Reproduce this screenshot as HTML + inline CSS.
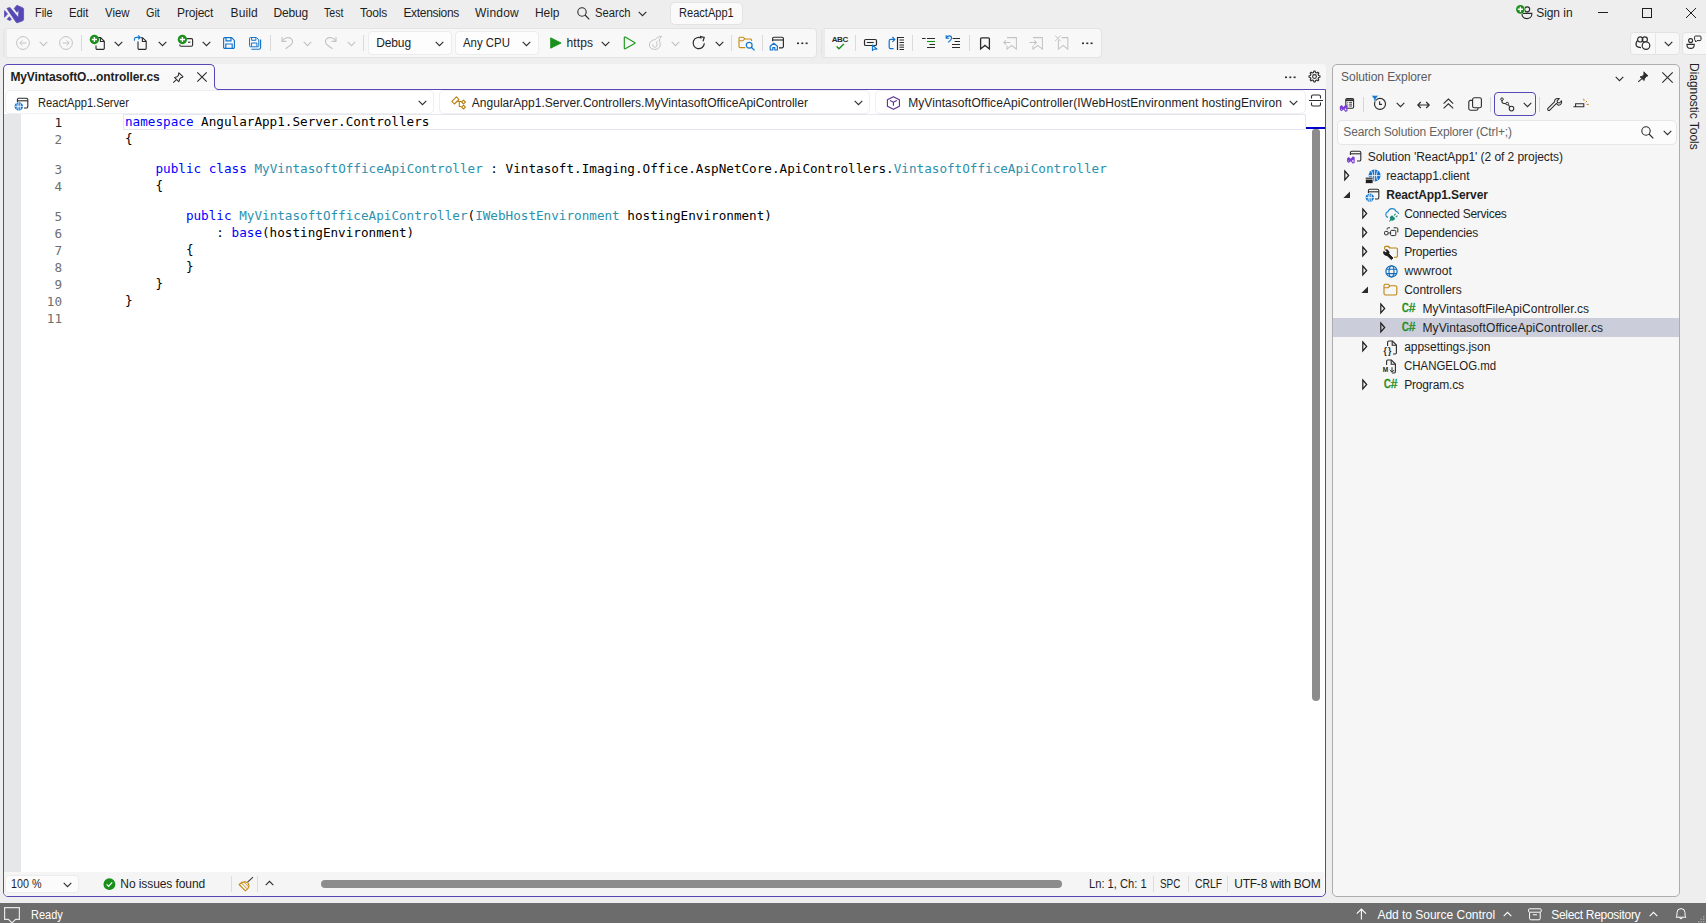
<!DOCTYPE html>
<html lang="en"><head><meta charset="utf-8"><title>ReactApp1 - Microsoft Visual Studio</title>
<style>
*{box-sizing:border-box;margin:0;padding:0}
html,body{width:1706px;height:923px;overflow:hidden;background:#eeeeee;font-family:'Liberation Sans',sans-serif;font-size:12px;color:#1e1e1e}
.t{position:absolute;white-space:pre;line-height:16px;height:16px}
.a{position:absolute}
svg{position:absolute;overflow:visible}
.sep{position:absolute;width:1px;background:#dcdcdc}
.tb{position:absolute;background:#f8f8f8;border-radius:4px;top:28px;height:30px;border:1px solid #e3e3e3}
.dd{position:absolute;background:#fdfdfd;border:1px solid #ececec;border-radius:4px}
.c{position:absolute;white-space:pre;font-family:'DejaVu Sans Mono','Liberation Mono',monospace;font-size:12.65px;line-height:17px;height:17px;color:#000;left:125px}
.k{color:#0000ff}.ty{color:#2b91af}
.ln{position:absolute;font-family:'DejaVu Sans Mono','Liberation Mono',monospace;font-size:12.65px;line-height:17px;height:17px;color:#6e6e6e;text-align:right;left:22px;width:40px}
</style></head><body>
<svg style="left:0px;top:0px" width="28" height="28" viewBox="0 0 28 28"><g fill="#5548b5" stroke="#5548b5" stroke-width="0.7" stroke-linejoin="round">
<path d="M4.5 10.6 V17.3 L7.5 14 Z"/>
<path d="M9.4 16.7 L7.2 19.3 L9.7 20.4 L11.4 19.5 Z"/>
<path d="M6.9 8.4 L9.9 7.4 L18.3 17.6 L18.9 9.9 L16.8 12.2 L14.2 8.4 L16.9 5.3 L23 7.9 L23.6 8.9 V19.7 L22.9 20.7 L17.2 22.8 L16.1 22.3 Z"/>
</g></svg>
<span class="t" style="left:35.20px;top:5.14px;font-size:12px;color:#1e1e1e;transform:scaleX(0.9053);transform-origin:0 0;">File</span>
<span class="t" style="left:69.00px;top:5.14px;font-size:12px;color:#1e1e1e;transform:scaleX(0.9417);transform-origin:0 0;">Edit</span>
<span class="t" style="left:105.10px;top:5.14px;font-size:12px;color:#1e1e1e;transform:scaleX(0.9492);transform-origin:0 0;">View</span>
<span class="t" style="left:146.40px;top:5.14px;font-size:12px;color:#1e1e1e;transform:scaleX(0.9000);transform-origin:0 0;">Git</span>
<span class="t" style="left:177.10px;top:5.14px;font-size:12px;color:#1e1e1e;letter-spacing:-0.202px;">Project</span>
<span class="t" style="left:230.60px;top:5.14px;font-size:12px;color:#1e1e1e;letter-spacing:0.073px;">Build</span>
<span class="t" style="left:273.60px;top:5.14px;font-size:12px;color:#1e1e1e;letter-spacing:-0.222px;">Debug</span>
<span class="t" style="left:324.10px;top:5.14px;font-size:12px;color:#1e1e1e;transform:scaleX(0.8865);transform-origin:0 0;">Test</span>
<span class="t" style="left:360.10px;top:5.14px;font-size:12px;color:#1e1e1e;letter-spacing:-0.228px;">Tools</span>
<span class="t" style="left:403.40px;top:5.14px;font-size:12px;color:#1e1e1e;letter-spacing:-0.311px;">Extensions</span>
<span class="t" style="left:475.00px;top:5.14px;font-size:12px;color:#1e1e1e;letter-spacing:0.197px;">Window</span>
<span class="t" style="left:535.00px;top:5.14px;font-size:12px;color:#1e1e1e;letter-spacing:-0.069px;">Help</span>
<span class="t" style="left:595.10px;top:5.14px;font-size:12px;color:#1e1e1e;transform:scaleX(0.9345);transform-origin:0 0;">Search</span>
<svg style="left:577px;top:6.6px" width="13" height="13" viewBox="0 0 13 13"><circle cx="5" cy="5" r="4.2" fill="none" stroke="#2b2b2b" stroke-width="1.1"/><path d="M8 8 L12.3 12.3" stroke="#2b2b2b" stroke-width="1.2"/></svg>
<svg style="left:637.6px;top:10.6px" width="9" height="6" viewBox="0 0 9 6"><path d="M0.7 0.9 L4.5 4.7 L8.3 0.9" fill="none" stroke="#2b2b2b" stroke-width="1.1"/></svg>
<div class="a" style="left:669.5px;top:1.5px;width:73px;height:23px;background:#fafafa;border:1px solid #e3e3e3;border-radius:5px"></div>
<span class="t" style="left:678.80px;top:5.14px;font-size:12px;color:#1e1e1e;transform:scaleX(0.9213);transform-origin:0 0;">ReactApp1</span>
<svg style="left:1516px;top:4px" width="18" height="16" viewBox="0 0 18 16">
<circle cx="11.2" cy="5.3" r="2.5" fill="none" stroke="#2b2b2b" stroke-width="1.15"/>
<path d="M6 9.4 H15.8 V10.2 A4.9 4.4 0 0 1 6 10.2 Z" fill="none" stroke="#2b2b2b" stroke-width="1.15"/>
<circle cx="4.4" cy="5.3" r="4.9" fill="#eeeeee"/>
<circle cx="4.4" cy="5.3" r="4.35" fill="#1a8f1a"/>
<path d="M4.4 2.7 V7.9 M1.8 5.3 H7" stroke="#fff" stroke-width="1.4"/></svg>
<span class="t" style="left:1536.20px;top:5.14px;font-size:12px;color:#1e1e1e;letter-spacing:-0.053px;">Sign in</span>
<div class="a" style="left:1598px;top:12px;width:10px;height:1px;background:#1e1e1e"></div>
<div class="a" style="left:1642px;top:8px;width:10px;height:10px;border:1px solid #1e1e1e"></div>
<svg style="left:1686px;top:8px" width="10" height="10" viewBox="0 0 10 10"><path d="M0 0 L10 10 M10 0 L0 10" stroke="#1e1e1e" stroke-width="1"/></svg>
<div class="tb" style="left:3px;width:814px"></div>
<div class="a" style="left:4px;top:29px;width:3px;height:28px;background:#ebebeb;border-radius:3px 0 0 3px"></div>
<div class="tb" style="left:821px;width:281px"></div>
<div class="a" style="left:822px;top:29px;width:2.5px;height:28px;background:#ebebeb;border-radius:3px 0 0 3px"></div>
<svg style="left:16px;top:36px" width="14" height="14" viewBox="0 0 14 14"><circle cx="7" cy="7" r="6.4" fill="none" stroke="#c3c3c3" stroke-width="1"/><path d="M10.3 7 H3.9 M6.4 4.4 L3.8 7 L6.4 9.6" fill="none" stroke="#c3c3c3" stroke-width="1"/></svg>
<svg style="left:38.5px;top:41px" width="9" height="6" viewBox="0 0 9 6"><path d="M0.7 0.9 L4.5 4.7 L8.3 0.9" fill="none" stroke="#c3c3c3" stroke-width="1.1"/></svg>
<svg style="left:59px;top:36px" width="14" height="14" viewBox="0 0 14 14"><circle cx="7" cy="7" r="6.4" fill="none" stroke="#c3c3c3" stroke-width="1"/><path d="M3.7 7 H10.1 M7.6 4.4 L10.2 7 L7.6 9.6" fill="none" stroke="#c3c3c3" stroke-width="1"/></svg>
<div class="sep" style="left:81px;top:35px;height:16px;background:#dadada"></div>
<svg style="left:90px;top:35px" width="16" height="16" viewBox="0 0 16 16"><path d="M7 2.6 H10.6 L14.3 6.3 V13.2 A1.2 1.2 0 0 1 13.1 14.4 H7.2 A1.2 1.2 0 0 1 6 13.2 V10.5" fill="none" stroke="#2b2b2b" stroke-width="1.1"/><path d="M10.4 2.8 V6.5 H14.1" fill="none" stroke="#2b2b2b" stroke-width="1.1"/><circle cx="4.4" cy="4.5" r="4.65" fill="#1a8f1a"/><path d="M4.4 1.9 V7.1 M1.8 4.5 H7" stroke="#fff" stroke-width="1.4"/></svg>
<svg style="left:114px;top:41px" width="9" height="6" viewBox="0 0 9 6"><path d="M0.7 0.9 L4.5 4.7 L8.3 0.9" fill="none" stroke="#2b2b2b" stroke-width="1.1"/></svg>
<svg style="left:133px;top:35px" width="16" height="16" viewBox="0 0 16 16"><path d="M5 6.5 V13.2 A1.2 1.2 0 0 0 6.2 14.4 H12 A1.2 1.2 0 0 0 13.2 13.2 V6.3 L9.6 2.7 H7.5" fill="none" stroke="#2b2b2b" stroke-width="1.1"/><path d="M9.4 2.9 V6.5 H13" fill="none" stroke="#2b2b2b" stroke-width="1.1"/><path d="M1.4 5.8 V4.4 A2 2 0 0 1 3.4 2.4 H7 M5.2 0.4 L7.2 2.4 L5.2 4.4" fill="none" stroke="#1173cf" stroke-width="1.1"/></svg>
<svg style="left:157.5px;top:41px" width="9" height="6" viewBox="0 0 9 6"><path d="M0.7 0.9 L4.5 4.7 L8.3 0.9" fill="none" stroke="#2b2b2b" stroke-width="1.1"/></svg>
<svg style="left:178px;top:35px" width="16" height="16" viewBox="0 0 16 16"><path d="M9 3.6 H13.4 A1.2 1.2 0 0 1 14.6 4.8 V10 A1.2 1.2 0 0 1 13.4 11.2 H3 A1.2 1.2 0 0 1 1.8 10 V9.5" fill="none" stroke="#2b2b2b" stroke-width="1.1"/><path d="M10 7.2 H12.4" stroke="#2b2b2b" stroke-width="1.1"/><circle cx="4.4" cy="4.5" r="4.65" fill="#1a8f1a"/><path d="M4.4 1.9 V7.1 M1.8 4.5 H7" stroke="#fff" stroke-width="1.4"/></svg>
<svg style="left:201.5px;top:41px" width="9" height="6" viewBox="0 0 9 6"><path d="M0.7 0.9 L4.5 4.7 L8.3 0.9" fill="none" stroke="#2b2b2b" stroke-width="1.1"/></svg>
<svg style="left:223px;top:37px" width="12" height="12" viewBox="0 0 12 12"><path d="M1.6 0.6 H8.6 L11.4 3.4 V10.2 A1.2 1.2 0 0 1 10.2 11.4 H1.8 A1.2 1.2 0 0 1 0.6 10.2 V1.6 A1 1 0 0 1 1.6 0.6 Z" fill="none" stroke="#1173cf" stroke-width="1.15"/><path d="M3 0.8 V3.8 H8 V0.8 M2.8 11.2 V7 H9.2 V11.2" fill="none" stroke="#1173cf" stroke-width="1.15"/></svg>
<svg style="left:249px;top:37px" width="13" height="13" viewBox="0 0 13 13"><g transform="scale(0.86)"><path d="M1.6 0.6 H8.6 L11.4 3.4 V10.2 A1.2 1.2 0 0 1 10.2 11.4 H1.8 A1.2 1.2 0 0 1 0.6 10.2 V1.6 A1 1 0 0 1 1.6 0.6 Z" fill="none" stroke="#1173cf" stroke-width="1.15"/><path d="M3 0.8 V3.8 H8 V0.8 M2.8 11.2 V7 H9.2 V11.2" fill="none" stroke="#1173cf" stroke-width="1.15"/></g><path d="M11.6 2.6 V10.4 A1.8 1.8 0 0 1 9.8 12.2 H2.4" fill="none" stroke="#1173cf" stroke-width="1.15"/></svg>
<div class="sep" style="left:270px;top:35px;height:16px;background:#dadada"></div>
<svg style="left:281px;top:36px" width="13" height="13" viewBox="0 0 13 13"><path d="M1 1 V5.4 H5.4" fill="none" stroke="#c3c3c3" stroke-width="1.1"/><path d="M1.3 5.2 C3.2 1.6 7.8 0.6 10.3 2.8 C12.6 5 11.6 7.6 9.4 9.2 L4.6 12.8" fill="none" stroke="#c3c3c3" stroke-width="1.1"/></svg>
<svg style="left:302.5px;top:41px" width="9" height="6" viewBox="0 0 9 6"><path d="M0.7 0.9 L4.5 4.7 L8.3 0.9" fill="none" stroke="#c3c3c3" stroke-width="1.1"/></svg>
<svg style="left:324px;top:36px" width="13" height="13" viewBox="0 0 13 13"><g transform="translate(13,0) scale(-1,1)"><path d="M1 1 V5.4 H5.4" fill="none" stroke="#c3c3c3" stroke-width="1.1"/><path d="M1.3 5.2 C3.2 1.6 7.8 0.6 10.3 2.8 C12.6 5 11.6 7.6 9.4 9.2 L4.6 12.8" fill="none" stroke="#c3c3c3" stroke-width="1.1"/></g></svg>
<svg style="left:346.5px;top:41px" width="9" height="6" viewBox="0 0 9 6"><path d="M0.7 0.9 L4.5 4.7 L8.3 0.9" fill="none" stroke="#c3c3c3" stroke-width="1.1"/></svg>
<div class="sep" style="left:363px;top:35px;height:16px;background:#dadada"></div>
<div class="dd" style="left:367.5px;top:31px;width:84px;height:24px"></div>
<span class="t" style="left:376.20px;top:35.04px;font-size:12px;color:#1e1e1e;letter-spacing:-0.122px;">Debug</span>
<svg style="left:434.5px;top:41px" width="9" height="6" viewBox="0 0 9 6"><path d="M0.7 0.9 L4.5 4.7 L8.3 0.9" fill="none" stroke="#2b2b2b" stroke-width="1.1"/></svg>
<div class="dd" style="left:454.6px;top:31px;width:84px;height:24px"></div>
<span class="t" style="left:463.30px;top:35.04px;font-size:12px;color:#1e1e1e;transform:scaleX(0.9511);transform-origin:0 0;">Any CPU</span>
<svg style="left:521.5px;top:41px" width="9" height="6" viewBox="0 0 9 6"><path d="M0.7 0.9 L4.5 4.7 L8.3 0.9" fill="none" stroke="#2b2b2b" stroke-width="1.1"/></svg>
<svg style="left:550px;top:37px" width="12" height="12" viewBox="0 0 12 12"><path d="M0.6 0.8 L11.2 6 L0.6 11.2 Z" fill="#1a8f1a" stroke="#1a8f1a" stroke-width="0.8" stroke-linejoin="round"/></svg>
<span class="t" style="left:566.50px;top:35.04px;font-size:12px;color:#1e1e1e;letter-spacing:0.096px;">https</span>
<svg style="left:600.5px;top:41px" width="9" height="6" viewBox="0 0 9 6"><path d="M0.7 0.9 L4.5 4.7 L8.3 0.9" fill="none" stroke="#2b2b2b" stroke-width="1.1"/></svg>
<svg style="left:623px;top:36px" width="13" height="14" viewBox="0 0 13 14"><path d="M1.3 1.6 A0.6 0.6 0 0 1 2.2 1.1 L11.6 6.4 A0.6 0.6 0 0 1 11.6 7.5 L2.2 12.8 A0.6 0.6 0 0 1 1.3 12.3 Z" fill="none" stroke="#1c9a1c" stroke-width="1.15" stroke-linejoin="round"/></svg>
<svg style="left:648px;top:35px" width="16" height="16" viewBox="0 0 16 16"><path d="M13.6 1.2 C10.8 1.4 8.6 2.6 7.4 4.6 C4.2 4.6 1.4 7 1.4 10 C1.4 12.8 3.8 14.4 6.8 14.4 C10.2 14.4 12.6 12 12.2 8.8 C12 7.2 11.2 6.4 11.4 5 C11.6 3.6 12.8 2.6 13.6 1.2 Z" fill="none" stroke="#c3c3c3" stroke-width="1"/><path d="M4.8 9.2 C4.4 11.2 5.8 12.4 7.2 12.2 C8.8 12 9.6 10.4 8.8 8.8 C8.2 7.8 8.6 6.8 9.6 5.8" fill="none" stroke="#c3c3c3" stroke-width="1"/></svg>
<svg style="left:671px;top:41px" width="9" height="6" viewBox="0 0 9 6"><path d="M0.7 0.9 L4.5 4.7 L8.3 0.9" fill="none" stroke="#c3c3c3" stroke-width="1.1"/></svg>
<svg style="left:692px;top:36px" width="14" height="14" viewBox="0 0 14 14"><path d="M12.3 7.2 A5.6 5.6 0 1 1 9.6 2.3" fill="none" stroke="#2b2b2b" stroke-width="1.2"/><path d="M8 0.4 L12.2 1.4 L11 5.4" fill="none" stroke="#2b2b2b" stroke-width="1.2"/></svg>
<svg style="left:714.5px;top:41px" width="9" height="6" viewBox="0 0 9 6"><path d="M0.7 0.9 L4.5 4.7 L8.3 0.9" fill="none" stroke="#2b2b2b" stroke-width="1.1"/></svg>
<div class="sep" style="left:731px;top:35px;height:16px;background:#dadada"></div>
<svg style="left:738px;top:36px" width="18" height="15" viewBox="0 0 18 15"><path d="M7.2 11.6 H2.2 A1.2 1.2 0 0 1 1 10.4 V2.4 A1.2 1.2 0 0 1 2.2 1.2 H5.2 L7 3 H12.4 A1.2 1.2 0 0 1 13.6 4.2 V5" fill="none" stroke="#c58a12" stroke-width="1.1"/><path d="M1.2 4.8 H4.8 L6.6 3.2" fill="none" stroke="#c58a12" stroke-width="1.1"/><circle cx="11.2" cy="9.2" r="2.9" fill="none" stroke="#1173cf" stroke-width="1.2"/><path d="M13.3 11.3 L16.6 14.4" stroke="#1173cf" stroke-width="1.3"/></svg>
<div class="sep" style="left:762px;top:35px;height:16px;background:#dadada"></div>
<svg style="left:769px;top:36px" width="16" height="15" viewBox="0 0 16 15"><path d="M3.6 5.2 V2.6 A1.4 1.4 0 0 1 5 1.2 H13 A1.4 1.4 0 0 1 14.4 2.6 V10.4 A1.4 1.4 0 0 1 13 11.8 H10" fill="none" stroke="#2b2b2b" stroke-width="1.15"/><path d="M3.6 4 H14.4" stroke="#2b2b2b" stroke-width="1.15"/><path d="M1.2 14 V10.2 L4.8 7.2 L8.4 10.2 V14 H5.8 V11.6 H3.8 V14 Z" fill="none" stroke="#1173cf" stroke-width="1.15" stroke-linejoin="round"/></svg>
<svg style="left:797px;top:42px" width="11" height="3"><rect x="0" y="0.5" width="2" height="1.6" fill="#2b2b2b"/><rect x="4.3" y="0.5" width="2" height="1.6" fill="#2b2b2b"/><rect x="8.6" y="0.5" width="2" height="1.6" fill="#2b2b2b"/></svg>
<svg style="left:832px;top:36px" width="16" height="15" viewBox="0 0 16 15"><path d="M4.6 10.4 L7 12.8 L11.8 8" fill="none" stroke="#1a8f1a" stroke-width="1.4"/></svg>
<span class="t" style="left:831.8px;top:34.7px;font-size:8px;font-weight:bold;line-height:9px;height:9px;letter-spacing:-0.45px;color:#2b2b2b">ABC</span>
<div class="sep" style="left:855px;top:35px;height:16px;background:#dadada"></div>
<svg style="left:863px;top:38px" width="16" height="14" viewBox="0 0 16 14"><rect x="1.5" y="1.5" width="12" height="6" rx="1.3" fill="none" stroke="#2b2b2b" stroke-width="1.2"/><path d="M3.8 4.5 H10.8" stroke="#2b2b2b" stroke-width="1.1"/><path d="M9.4 7 V12.6 L11 11 L14 11.2 Z" fill="#f8f8f8" stroke="#1173cf" stroke-width="1.05" stroke-linejoin="round"/></svg>
<svg style="left:888px;top:36px" width="17" height="15" viewBox="0 0 17 15"><path d="M9.5 1.5 H16 M11.5 4 H16 M11.5 6.5 H16 M11.5 9 H16 M11.5 11.2 H16 M11.5 13.5 H16" stroke="#2b2b2b" stroke-width="1"/><path d="M9.5 1 V14" stroke="#2b2b2b" stroke-width="1.2"/><path d="M5.6 12.6 H2.6 A1.4 1.4 0 0 1 1.2 11.2 V4.8 A1.4 1.4 0 0 1 2.6 3.4 H6.2 M4.4 1 L6.8 3.4 L4.4 5.8" fill="none" stroke="#1173cf" stroke-width="1.2"/></svg>
<div class="sep" style="left:912px;top:35px;height:16px;background:#dadada"></div>
<svg style="left:922px;top:38px" width="14" height="11" viewBox="0 0 14 11"><path d="M0 0.5 H3.6 M5 0.5 H13 M7.5 6.5 H13 M5 9.5 H13" stroke="#2b2b2b" stroke-width="1.1"/><path d="M5 3.5 H13" stroke="#1a8f1a" stroke-width="1.1"/></svg>
<svg style="left:945px;top:34px" width="16" height="15" viewBox="0 0 16 15"><path d="M7.6 4.5 H15 M9.6 7.5 H15 M7 10.5 H15 M7 13.5 H15" stroke="#2b2b2b" stroke-width="1.1"/><path d="M1.2 1.2 V4.2 H4.2 M1.4 4 C2.6 1.2 6.4 1.2 6.6 4 C6.6 5.8 4.6 7 3 8.4" fill="none" stroke="#1173cf" stroke-width="1.15"/></svg>
<div class="sep" style="left:969px;top:35px;height:16px;background:#dadada"></div>
<svg style="left:979px;top:37px" width="12" height="13" viewBox="0 0 12 13"><path d="M1.6 1.8 A1 1 0 0 1 2.6 0.8 H9.4 A1 1 0 0 1 10.4 1.8 V12 L6 8.4 L1.6 12 Z" fill="none" stroke="#2b2b2b" stroke-width="1.3" stroke-linejoin="miter"/></svg>
<svg style="left:1003px;top:37px" width="14" height="14" viewBox="0 0 14 14"><path d="M4 0.6 H13.4 V12.2 L8.7 8.4 L4 12.2 V8.4" fill="none" stroke="#c3c3c3" stroke-width="1.05"/><path d="M7.4 5.5 H0.8 M3 3.3 L0.8 5.5 L3 7.7" fill="none" stroke="#c3c3c3" stroke-width="1.05"/></svg>
<svg style="left:1029px;top:37px" width="14" height="14" viewBox="0 0 14 14"><path d="M4 0.6 H13.4 V12.2 L8.7 8.4 L4 12.2 V8.4" fill="none" stroke="#c3c3c3" stroke-width="1.05"/><path d="M0.4 5.5 H7.4 M5.2 3.3 L7.4 5.5 L5.2 7.7" fill="none" stroke="#c3c3c3" stroke-width="1.05"/></svg>
<svg style="left:1054px;top:35px" width="15" height="16" viewBox="0 0 15 16"><path d="M4.4 5 V14.2 L9.1 10.4 L13.8 14.2 V2.6 H7.6" fill="none" stroke="#c3c3c3" stroke-width="1.05"/><path d="M1 0.4 L6.8 6.2 M6.8 0.4 L1 6.2" stroke="#c3c3c3" stroke-width="1"/></svg>
<svg style="left:1082px;top:42px" width="11" height="3"><rect x="0" y="0.5" width="2" height="1.6" fill="#2b2b2b"/><rect x="4.3" y="0.5" width="2" height="1.6" fill="#2b2b2b"/><rect x="8.6" y="0.5" width="2" height="1.6" fill="#2b2b2b"/></svg>
<div class="a" style="left:1630.4px;top:31.5px;width:49.2px;height:23.5px;background:#f8f8f8;border:1px solid #e2e2e2;border-radius:4px"></div>
<div class="a" style="left:1655px;top:33px;width:1px;height:21px;background:#e6e6e6"></div>
<svg style="left:1635px;top:35px" width="16" height="15" viewBox="0 0 16 15"><circle cx="5.2" cy="4.4" r="2.6" fill="none" stroke="#2b2b2b" stroke-width="1.2"/><circle cx="9.8" cy="4.4" r="2.6" fill="none" stroke="#2b2b2b" stroke-width="1.2"/><path d="M2.6 5.6 C1 7 0.6 9.8 1.6 11.2 C2.4 12.2 4 12.6 6 12.6" fill="none" stroke="#2b2b2b" stroke-width="1.3"/><circle cx="11" cy="10.6" r="3.8" fill="#f8f8f8" stroke="#2b2b2b" stroke-width="1.2"/></svg>
<svg style="left:1663.5px;top:41px" width="9" height="6" viewBox="0 0 9 6"><path d="M0.7 0.9 L4.5 4.7 L8.3 0.9" fill="none" stroke="#2b2b2b" stroke-width="1.1"/></svg>
<div class="a" style="left:1682.3px;top:31.5px;width:27px;height:23.5px;background:#f8f8f8;border:1px solid #e2e2e2;border-radius:4px"></div>
<svg style="left:1686px;top:35px" width="16" height="15" viewBox="0 0 16 15"><circle cx="4.6" cy="5.6" r="2" fill="none" stroke="#2b2b2b" stroke-width="1.1"/><path d="M1 9.4 H8.2 V10 A3.6 3.4 0 0 1 1 10 Z" fill="none" stroke="#2b2b2b" stroke-width="1.1"/><path d="M9.4 1 H14 A1 1 0 0 1 15 2 V4.6 A1 1 0 0 1 14 5.6 H11 L9.6 7 V5.6 A1 1 0 0 1 8.6 4.6 V2 A1 1 0 0 1 9.4 1 Z" fill="none" stroke="#2b2b2b" stroke-width="1"/></svg>
<div class="a" style="left:3px;top:64px;width:1323px;height:27px;background:#f7f7f7;border-radius:4px 4px 0 0"></div>
<div class="a" style="left:3px;top:89px;width:1323px;height:808px;background:#fff;border:1px solid #5548b5;border-radius:0 0 5px 5px"></div>
<div class="a" style="left:3px;top:64px;width:212px;height:27px;background:#f9f9f9;border:1px solid #5548b5;border-bottom:none;border-radius:5px 5px 0 0"></div>
<div class="a" style="left:4px;top:88px;width:210px;height:3px;background:#f9f9f9"></div>
<svg style="left:214px;top:85px" width="5" height="5" viewBox="0 0 5 5"><path d="M0 0 V5 H5 V4.5 C2 4.5 0.5 3 0.5 0 Z" fill="#f9f9f9"/><path d="M0.5 0 C0.5 3 2 4.5 5 4.5" fill="none" stroke="#5548b5" stroke-width="1"/></svg>
<span class="t" style="left:10.40px;top:68.74px;font-size:12px;color:#1e1e1e;letter-spacing:-0.098px;font-weight:bold;">MyVintasoftO...ontroller.cs</span>
<svg style="left:172px;top:71.5px" width="12" height="11" viewBox="0 0 12 11"><path d="M6.9 0.9 L10.9 4.7 C10.4 5.6 9.8 5.6 9 5.6 L7.4 7.4 C7.6 8.4 7.4 9 6.8 9.6 L2.6 5.6 C3.2 5 4 4.8 4.8 5 L6.6 3.2 C6.4 2.4 6.4 1.6 6.9 0.9 Z" fill="none" stroke="#2b2b2b" stroke-width="1.05" stroke-linejoin="round"/><path d="M4.6 7.7 L1.2 10.6" stroke="#2b2b2b" stroke-width="1.05"/></svg>
<svg style="left:197px;top:72px" width="10" height="10" viewBox="0 0 10 10"><path d="M0.3 0.3 L9.7 9.7 M9.7 0.3 L0.3 9.7" stroke="#2b2b2b" stroke-width="1.1"/></svg>
<svg style="left:1285px;top:76px" width="11" height="3"><rect x="0" y="0.5" width="2" height="1.6" fill="#2b2b2b"/><rect x="4.3" y="0.5" width="2" height="1.6" fill="#2b2b2b"/><rect x="8.6" y="0.5" width="2" height="1.6" fill="#2b2b2b"/></svg>
<svg style="left:1307.6px;top:70.4px" width="13" height="13" viewBox="0 0 13 13"><circle cx="6.5" cy="6.5" r="1.9" fill="none" stroke="#2b2b2b" stroke-width="1.05"/><path d="M5.52 2.42 L5.81 1.04 L7.19 1.04 L7.48 2.42 L8.69 2.92 L9.87 2.15 L10.85 3.13 L10.08 4.31 L10.58 5.52 L11.96 5.81 L11.96 7.19 L10.58 7.48 L10.08 8.69 L10.85 9.87 L9.87 10.85 L8.69 10.08 L7.48 10.58 L7.19 11.96 L5.81 11.96 L5.52 10.58 L4.31 10.08 L3.13 10.85 L2.15 9.87 L2.92 8.69 L2.42 7.48 L1.04 7.19 L1.04 5.81 L2.42 5.52 L2.92 4.31 L2.15 3.13 L3.13 2.15 L4.31 2.92 Z" fill="none" stroke="#2b2b2b" stroke-width="1.1" stroke-linejoin="round"/></svg>
<div class="a" style="left:4px;top:90px;width:1321px;height:24px;background:#fff"></div>
<div class="a" style="left:5px;top:90px;width:429px;height:24px;background:#fff;border:1px solid #efeff3;border-radius:5px"></div>
<div class="a" style="left:439px;top:90px;width:431px;height:24px;background:#fff;border:1px solid #efeff3;border-radius:5px"></div>
<div class="a" style="left:875px;top:90px;width:431px;height:24px;background:#fff;border:1px solid #efeff3;border-radius:5px"></div>
<div class="a" style="left:1306px;top:90px;width:19px;height:24px;background:#fff"></div>
<svg style="left:14px;top:97px" width="15" height="14" viewBox="0 0 15 14"><path d="M3.4 5 V2.6 A1.4 1.4 0 0 1 4.8 1.2 H12.4 A1.4 1.4 0 0 1 13.8 2.6 V9.6 A1.4 1.4 0 0 1 12.4 11 H10" fill="none" stroke="#2b2b2b" stroke-width="1.1"/><path d="M3.4 3.8 H13.8" stroke="#2b2b2b" stroke-width="1.1"/><circle cx="4.8" cy="9.4" r="4.2" fill="#1173cf"/><path d="M0.8 9.4 H8.8 M4.8 5.4 V13.4 M2.6 6.2 C3.6 8 3.6 10.8 2.6 12.6 M7 6.2 C6 8 6 10.8 7 12.6" stroke="#fff" stroke-width="0.8" fill="none"/></svg>
<span class="t" style="left:37.60px;top:95.04px;font-size:12px;color:#1e1e1e;transform:scaleX(0.9281);transform-origin:0 0;">ReactApp1.Server</span>
<svg style="left:417.5px;top:99.5px" width="9" height="6" viewBox="0 0 9 6"><path d="M0.7 0.9 L4.5 4.7 L8.3 0.9" fill="none" stroke="#2b2b2b" stroke-width="1.1"/></svg>
<svg style="left:450.7px;top:96px" width="16" height="14" viewBox="0 0 16 14"><g fill="none" stroke="#b9800f" stroke-width="1.1" stroke-linejoin="round"><path d="M0.9 5.3 L5.4 0.8 L7.9 3.5 L3.4 8 Z"/><path d="M6.3 5.5 H10.6 M8.3 5.5 V10.5 H10.4"/><path d="M10.6 6 L12.5 4.1 L14.4 6 L12.5 7.9 Z"/><path d="M10.6 11.1 L12.5 9.2 L14.4 11.1 L12.5 13 Z"/></g></svg>
<span class="t" style="left:471.80px;top:95.04px;font-size:12px;color:#1e1e1e;letter-spacing:0.019px;">AngularApp1.Server.Controllers.MyVintasoftOfficeApiController</span>
<svg style="left:854px;top:99.5px" width="9" height="6" viewBox="0 0 9 6"><path d="M0.7 0.9 L4.5 4.7 L8.3 0.9" fill="none" stroke="#2b2b2b" stroke-width="1.1"/></svg>
<svg style="left:886.2px;top:96px" width="15" height="14" viewBox="0 0 15 14"><path d="M7.4 0.8 L13.4 3.8 V10.2 L7.4 13.2 L1.4 10.2 V3.8 Z" fill="none" stroke="#5c2d91" stroke-width="1.1" stroke-linejoin="round"/><path d="M4 4.6 L7.4 6.2 L10.8 4.6 M7.4 6.2 V9.8" fill="none" stroke="#5c2d91" stroke-width="1.15"/></svg>
<span class="t" style="left:908.20px;top:95.04px;font-size:12px;color:#1e1e1e;letter-spacing:0.067px;">MyVintasoftOfficeApiController(IWebHostEnvironment hostingEnviron</span>
<svg style="left:1289px;top:99.5px" width="9" height="6" viewBox="0 0 9 6"><path d="M0.7 0.9 L4.5 4.7 L8.3 0.9" fill="none" stroke="#2b2b2b" stroke-width="1.1"/></svg>
<svg style="left:1309px;top:94px" width="14" height="13" viewBox="0 0 14 13"><path d="M2.5 4.5 V2.5 A1.5 1.5 0 0 1 4 1 H10 A1.5 1.5 0 0 1 11.5 2.5 V4.5 M2.5 8.5 V10.5 A1.5 1.5 0 0 0 4 12 H10 A1.5 1.5 0 0 0 11.5 10.5 V8.5" fill="none" stroke="#2b2b2b" stroke-width="1.1"/><path d="M0 6.5 H14" stroke="#2b2b2b" stroke-width="1"/></svg>
<div class="a" style="left:4px;top:114px;width:17px;height:758px;background:#e6e7e8"></div>
<div class="a" style="left:123px;top:114px;width:1183px;height:16px;border:1px solid #e6e6ef"></div>
<div class="a" style="left:1306px;top:127px;width:19px;height:2px;background:#0000cd"></div>
<div class="a" style="left:1312px;top:129.4px;width:8px;height:571.6px;background:#8c8c8c;border-radius:3px 3px 4px 4px"></div>
<div class="ln" style="top:113.5px;color:#1e1e1e;">1</div>
<div class="c" style="top:112.8px"><span class="k">namespace</span> AngularApp1.Server.Controllers</div>
<div class="ln" style="top:130.5px;">2</div>
<div class="c" style="top:129.8px">{</div>
<div class="ln" style="top:160.5px;">3</div>
<div class="c" style="top:159.8px">    <span class="k">public</span> <span class="k">class</span> <span class="ty">MyVintasoftOfficeApiController</span> : Vintasoft.Imaging.Office.AspNetCore.ApiControllers.<span class="ty">VintasoftOfficeApiController</span></div>
<div class="ln" style="top:177.5px;">4</div>
<div class="c" style="top:176.8px">    {</div>
<div class="ln" style="top:207.5px;">5</div>
<div class="c" style="top:206.8px">        <span class="k">public</span> <span class="ty">MyVintasoftOfficeApiController</span>(<span class="ty">IWebHostEnvironment</span> hostingEnvironment)</div>
<div class="ln" style="top:224.5px;">6</div>
<div class="c" style="top:223.8px">            : <span class="k">base</span>(hostingEnvironment)</div>
<div class="ln" style="top:241.5px;">7</div>
<div class="c" style="top:240.8px">        {</div>
<div class="ln" style="top:258.5px;">8</div>
<div class="c" style="top:257.8px">        }</div>
<div class="ln" style="top:275.5px;">9</div>
<div class="c" style="top:274.8px">    }</div>
<div class="ln" style="top:292.5px;">10</div>
<div class="c" style="top:291.8px">}</div>
<div class="ln" style="top:309.5px;">11</div>
<div class="a" style="left:4px;top:872px;width:1320px;height:24px;background:#f5f5f5;border-radius:0 0 4px 4px"></div>
<div class="a" style="left:5px;top:875px;width:74px;height:18px;background:#fbfbfb;border:1px solid #ececec;border-radius:3px"></div>
<span class="t" style="left:11.00px;top:876.14px;font-size:12px;color:#1e1e1e;transform:scaleX(0.8965);transform-origin:0 0;">100 %</span>
<svg style="left:62.5px;top:881.5px" width="9" height="6" viewBox="0 0 9 6"><path d="M0.7 0.9 L4.5 4.7 L8.3 0.9" fill="none" stroke="#2b2b2b" stroke-width="1.1"/></svg>
<svg style="left:103px;top:878px" width="13" height="13" viewBox="0 0 13 13"><circle cx="6.4" cy="6.2" r="5.9" fill="#1a8f1a"/><path d="M3.6 6.4 L5.6 8.4 L9.2 4.4" fill="none" stroke="#fff" stroke-width="1.3"/></svg>
<span class="t" style="left:120.30px;top:876.14px;font-size:12px;color:#1e1e1e;letter-spacing:-0.084px;">No issues found</span>
<div class="sep" style="left:231px;top:876px;height:16px;background:#dcdcdc"></div>
<svg style="left:238px;top:876px" width="16" height="16" viewBox="0 0 16 16"><path d="M9.6 6.2 L15 1.2" stroke="#3a3a3a" stroke-width="1.1"/><path d="M1.1 8.5 L7.4 14.9 C10.6 12.6 11.7 9.6 10.2 7.4 C8.4 5 4.6 5.4 1.1 8.5 Z" fill="none" stroke="#c58a12" stroke-width="1.1" stroke-linejoin="round"/><path d="M3.4 7 L9.2 12.9 M5.8 6 L10.6 10.8" stroke="#c58a12" stroke-width="0.9"/></svg>
<div class="sep" style="left:257px;top:876px;height:16px;background:#dcdcdc"></div>
<svg style="left:265.2px;top:880.4px" width="9" height="6" viewBox="0 0 9 6"><path d="M0.7 5.1 L4.5 1.3 L8.3 5.1" fill="none" stroke="#2b2b2b" stroke-width="1.1"/></svg>
<div class="a" style="left:321px;top:880px;width:741px;height:8px;background:#8c8c8c;border-radius:4px"></div>
<span class="t" style="left:1089.00px;top:876.14px;font-size:12px;color:#1e1e1e;transform:scaleX(0.9284);transform-origin:0 0;">Ln: 1, Ch: 1</span>
<div class="sep" style="left:1153.4px;top:876px;height:16px;background:#dcdcdc"></div>
<span class="t" style="left:1160.20px;top:876.14px;font-size:12px;color:#1e1e1e;transform:scaleX(0.8237);transform-origin:0 0;">SPC</span>
<div class="sep" style="left:1187.5px;top:876px;height:16px;background:#dcdcdc"></div>
<span class="t" style="left:1194.50px;top:876.14px;font-size:12px;color:#1e1e1e;transform:scaleX(0.8676);transform-origin:0 0;">CRLF</span>
<div class="sep" style="left:1227px;top:876px;height:16px;background:#dcdcdc"></div>
<span class="t" style="left:1234.20px;top:876.14px;font-size:12px;color:#1e1e1e;letter-spacing:-0.219px;">UTF-8 with BOM</span>
<div class="a" style="left:1332px;top:64px;width:348px;height:833px;background:#f6f6f6;border:1px solid #adadad;border-radius:5px"></div>
<span class="t" style="left:1341.10px;top:69.44px;font-size:12px;color:#5c5c5c;letter-spacing:-0.068px;">Solution Explorer</span>
<svg style="left:1614.5px;top:75.5px" width="9" height="6" viewBox="0 0 9 6"><path d="M0.7 0.9 L4.5 4.7 L8.3 0.9" fill="none" stroke="#2b2b2b" stroke-width="1.1"/></svg>
<svg style="left:1637px;top:71px" width="12" height="12" viewBox="0 0 12 12"><path d="M6.8 0.8 L11 4.8 L9.4 5.4 L7.4 7.8 L7.2 9.6 L3 5.8 L5.2 5.4 L7 3.2 Z" fill="#2b2b2b" stroke="#2b2b2b" stroke-width="0.8" stroke-linejoin="round"/><path d="M5 7.6 L1.2 10.8" stroke="#2b2b2b" stroke-width="1.1"/></svg>
<svg style="left:1661.5px;top:71.5px" width="11" height="11" viewBox="0 0 11 11"><path d="M0.3 0.3 L10.7 10.7 M10.7 0.3 L0.3 10.7" stroke="#2b2b2b" stroke-width="1.1"/></svg>
<svg style="left:1339px;top:96px" width="16" height="16" viewBox="0 0 16 16"><rect x="6.8" y="2.6" width="7.8" height="9.6" rx="1.2" fill="none" stroke="#2b2b2b" stroke-width="1.1"/><path d="M6.8 4.2 H14.6" stroke="#2b2b2b" stroke-width="1.7"/><path d="M8.4 6.4 H9.2 M10.2 6.4 H13 M8.4 8.2 H9.2 M10.2 8.2 H13 M8.4 10 H9.2 M10.2 10 H13" stroke="#2b2b2b" stroke-width="0.9"/><path d="M0.8 8.4 m0 2.2 l1.7 -1.5 l2.1 1.8 l2 -2.4 l1.9 0.9 v5.6 l-1.9 0.9 l-2 -2.4 l-2.1 1.8 l-1.7 -1.5 z m1.5 1.9 v1.4 l0.9 -0.7 z m3.3 0.7 l1.7 1.6 v-3.2 z" fill="#7a3ed6" fill-rule="evenodd"/></svg>
<div class="sep" style="left:1363px;top:97px;height:15px;background:#d6d6d6"></div>
<svg style="left:1371px;top:95px" width="16" height="16" viewBox="0 0 16 16"><circle cx="9" cy="8.9" r="5.5" fill="none" stroke="#2b2b2b" stroke-width="1.15"/><path d="M8.6 6.2 V9.4 H11" fill="none" stroke="#2b2b2b" stroke-width="1.1"/><path d="M0.4 0.6 H7.4 L4.9 3.8 V6.8 L2.9 5.6 V3.8 Z" fill="#1173cf" stroke="#f7f7f7" stroke-width="0.5"/></svg>
<svg style="left:1396px;top:101.5px" width="9" height="6" viewBox="0 0 9 6"><path d="M0.7 0.9 L4.5 4.7 L8.3 0.9" fill="none" stroke="#2b2b2b" stroke-width="1.1"/></svg>
<svg style="left:1416.5px;top:99.5px" width="13" height="10" viewBox="0 0 13 10"><path d="M0.8 5 H12.2 M3.8 2 L0.8 5 L3.8 8 M9.2 2 L12.2 5 L9.2 8" fill="none" stroke="#2b2b2b" stroke-width="1.15"/></svg>
<svg style="left:1443.4px;top:98.4px" width="11" height="11" viewBox="0 0 11 11"><path d="M0.6 5.6 L5.4 1 L10.2 5.6 M0.6 10.4 L5.4 5.8 L10.2 10.4" fill="none" stroke="#2b2b2b" stroke-width="1.05"/></svg>
<svg style="left:1468px;top:96.6px" width="15" height="14" viewBox="0 0 15 14"><rect x="4.6" y="0.8" width="8.8" height="10" rx="1.8" fill="none" stroke="#2b2b2b" stroke-width="1.1"/><path d="M4.4 3.4 H2.6 A1.8 1.8 0 0 0 0.8 5.2 V11.4 A1.8 1.8 0 0 0 2.6 13.2 H8.2 A1.8 1.8 0 0 0 10 11.4 V11" fill="none" stroke="#2b2b2b" stroke-width="1.1"/></svg>
<div class="sep" style="left:1490px;top:97px;height:15px;background:#d6d6d6"></div>
<div class="a" style="left:1494px;top:92px;width:42px;height:24px;background:#f5f5f5;border:1.3px solid #5449b5;border-radius:4px"></div>
<svg style="left:1499.6px;top:96.6px" width="15" height="15" viewBox="0 0 15 15"><circle cx="2" cy="2.2" r="1.3" fill="none" stroke="#2b2b2b" stroke-width="1"/><circle cx="7.2" cy="6.6" r="1.3" fill="none" stroke="#2b2b2b" stroke-width="1"/><circle cx="11.5" cy="11.6" r="2.3" fill="none" stroke="#2b2b2b" stroke-width="1.05"/><path d="M2 3.6 V5 C2 6.6 3.6 6.6 5.8 6.6 M8.2 7.6 L9.8 9.8" fill="none" stroke="#2b2b2b" stroke-width="1.05"/></svg>
<svg style="left:1523px;top:101.5px" width="9" height="6" viewBox="0 0 9 6"><path d="M0.7 0.9 L4.5 4.7 L8.3 0.9" fill="none" stroke="#2b2b2b" stroke-width="1.1"/></svg>
<div class="sep" style="left:1539px;top:97px;height:15px;background:#d6d6d6"></div>
<svg style="left:1547px;top:97px" width="15" height="15" viewBox="0 0 15 15"><path d="M9.2 5.6 L2.2 12.6 A1.4 1.4 0 0 1 0.4 10.8 L7.4 3.8 C7 2.2 8.2 0.6 10.6 0.6 L12 0.8 L9.8 3 L10.2 4.8 L12 5.2 L14.2 3 C14.8 5.6 13.2 7.6 11 7.4 Z" fill="none" stroke="#2b2b2b" stroke-width="1.05" stroke-linejoin="round" transform="translate(0.3,0.8)"/></svg>
<svg style="left:1572.6px;top:96.6px" width="18" height="14" viewBox="0 0 18 14"><path d="M2.6 6.8 H10.8 V9.8 H2.6 Z M0.4 9.8 H2.6" fill="none" stroke="#2b2b2b" stroke-width="1.05"/><path d="M12.6 5.4 L14 4 M13.6 7.4 H15.8 M11.2 3.8 L10.6 1.8" stroke="#bd840f" stroke-width="1"/></svg>
<div class="a" style="left:1336.5px;top:119.5px;width:340px;height:25px;background:#fcfcfc;border:1px solid #e6e6e6;border-radius:5px"></div>
<span class="t" style="left:1343.30px;top:123.94px;font-size:12px;color:#646464;letter-spacing:-0.137px;">Search Solution Explorer (Ctrl+;)</span>
<svg style="left:1640.5px;top:125.5px" width="13" height="13" viewBox="0 0 13 13"><circle cx="5" cy="5" r="4.2" fill="none" stroke="#2b2b2b" stroke-width="1.1"/><path d="M8 8 L12.3 12.3" stroke="#2b2b2b" stroke-width="1.2"/></svg>
<svg style="left:1663px;top:129.5px" width="9" height="6" viewBox="0 0 9 6"><path d="M0.7 0.9 L4.5 4.7 L8.3 0.9" fill="none" stroke="#2b2b2b" stroke-width="1.1"/></svg>
<div class="a" style="left:1333px;top:318px;width:346px;height:19px;background:#cbcdda"></div>
<svg style="left:1347px;top:150.4px" width="16" height="16" viewBox="0 0 16 16"><path d="M3.4 5 V2.6 A1.4 1.4 0 0 1 4.8 1.2 H12.4 A1.4 1.4 0 0 1 13.8 2.6 V9.6 A1.4 1.4 0 0 1 12.4 11 H10" fill="none" stroke="#2b2b2b" stroke-width="1.1"/><path d="M3.4 3.8 H13.8" stroke="#2b2b2b" stroke-width="1.1"/><path d="M0 6.2 m0 2.2 l1.7 -1.5 l2.1 1.8 l2 -2.4 l1.9 0.9 v5.6 l-1.9 0.9 l-2 -2.4 l-2.1 1.8 l-1.7 -1.5 z m1.5 1.9 v1.4 l0.9 -0.7 z m3.3 0.7 l1.7 1.6 v-3.2 z" fill="#7a3ed6" fill-rule="evenodd"/></svg>
<span class="t" style="left:1367.80px;top:149.24px;font-size:12px;color:#1e1e1e;letter-spacing:-0.058px;">Solution &#x27;ReactApp1&#x27; (2 of 2 projects)</span>
<svg style="left:1343.8px;top:170.1px" width="7" height="11" viewBox="0 0 7 11"><path d="M0.8 1 L4.7 5.5 L0.8 10 Z" fill="none" stroke="#1e1e1e" stroke-width="1.2"/></svg>
<svg style="left:1365px;top:169.4px" width="16" height="16" viewBox="0 0 16 16"><circle cx="9.6" cy="6.6" r="6" fill="#1173cf"/><path d="M3.5999999999999996 6.6 H15.6 M9.6 0.5999999999999996 V12.6 M6.6 1.799999999999999 C8.1 4.8 8.1 8.399999999999999 6.6 11.4 M12.6 1.799999999999999 C11.1 4.8 11.1 8.399999999999999 12.6 11.4" stroke="#fff" stroke-width="0.8" fill="none"/><rect x="0.4" y="8.2" width="7.6" height="6.4" rx="1" fill="#1e1e1e" stroke="#f5f5f5" stroke-width="0.8"/><path d="M0.6 10.2 H7.8" stroke="#f5f5f5" stroke-width="0.8"/></svg>
<span class="t" style="left:1386.20px;top:168.24px;font-size:12px;color:#1e1e1e;letter-spacing:-0.092px;">reactapp1.client</span>
<svg style="left:1343.0px;top:190.6px" width="8" height="8" viewBox="0 0 8 8"><path d="M7 0.4 V7 H0.4 Z" fill="#2b2b2b"/></svg>
<svg style="left:1364.6px;top:188.2px" width="16" height="16" viewBox="0 0 16 16"><path d="M3.4 5 V2.6 A1.4 1.4 0 0 1 4.8 1.2 H12.4 A1.4 1.4 0 0 1 13.8 2.6 V9.6 A1.4 1.4 0 0 1 12.4 11 H10" fill="none" stroke="#2b2b2b" stroke-width="1.1"/><path d="M3.4 3.8 H13.8" stroke="#2b2b2b" stroke-width="1.1"/><circle cx="4.8" cy="9.6" r="4.2" fill="#1173cf"/><path d="M0.5999999999999996 9.6 H9.0 M4.8 5.3999999999999995 V13.8 M2.6999999999999997 6.239999999999999 C3.75 8.34 3.75 10.86 2.6999999999999997 12.96 M6.9 6.239999999999999 C5.85 8.34 5.85 10.86 6.9 12.96" stroke="#fff" stroke-width="0.8" fill="none"/></svg>
<span class="t" style="left:1386.20px;top:187.24px;font-size:12px;color:#1e1e1e;letter-spacing:-0.114px;font-weight:bold;">ReactApp1.Server</span>
<svg style="left:1361.8px;top:208.1px" width="7" height="11" viewBox="0 0 7 11"><path d="M0.8 1 L4.7 5.5 L0.8 10 Z" fill="none" stroke="#1e1e1e" stroke-width="1.2"/></svg>
<svg style="left:1383.6px;top:207.2px" width="16" height="16" viewBox="0 0 16 16"><path d="M4 10.4 A3 3 0 0 1 4 4.6 A4.2 4.2 0 0 1 12 4.4 C13.4 4.6 14.4 5.6 14.6 6.8" fill="none" stroke="#1f86c9" stroke-width="1.1"/><path d="M5.4 14.4 L7.6 12.2 M8 9 L10.6 11.6 L9.4 12.8 C8.4 13.4 7.4 13 6.8 12.4 C6.2 11.6 6 10.8 6.8 10 Z M10 8.4 L11.6 6.8 M11.8 10.2 L13.4 8.6" fill="#1c8a7a" stroke="#1c8a7a" stroke-width="1.1" stroke-linejoin="round"/></svg>
<span class="t" style="left:1404.20px;top:206.24px;font-size:12px;color:#1e1e1e;letter-spacing:-0.282px;">Connected Services</span>
<svg style="left:1361.8px;top:227.1px" width="7" height="11" viewBox="0 0 7 11"><path d="M0.8 1 L4.7 5.5 L0.8 10 Z" fill="none" stroke="#1e1e1e" stroke-width="1.2"/></svg>
<svg style="left:1383.6px;top:227px" width="15" height="10" viewBox="0 0 15 10"><rect x="0.6" y="4.4" width="3.4" height="3.4" rx="0.8" fill="none" stroke="#2b2b2b" stroke-width="1"/><rect x="6.6" y="3.4" width="5.2" height="5.2" rx="1" fill="none" stroke="#2b2b2b" stroke-width="1"/><path d="M4.2 6 H6.4 M3.2 2.6 V1.8 A1 1 0 0 1 4.2 0.8 H6 M9.6 0.8 H12.8 A1 1 0 0 1 13.8 1.8 V5.4" fill="none" stroke="#2b2b2b" stroke-width="1"/></svg>
<span class="t" style="left:1404.20px;top:225.24px;font-size:12px;color:#1e1e1e;letter-spacing:-0.248px;">Dependencies</span>
<svg style="left:1361.8px;top:246.1px" width="7" height="11" viewBox="0 0 7 11"><path d="M0.8 1 L4.7 5.5 L0.8 10 Z" fill="none" stroke="#1e1e1e" stroke-width="1.2"/></svg>
<svg style="left:1383px;top:245px" width="16" height="16" viewBox="0 0 16 16"><path d="M1.6 4.4 V2.6 A1.2 1.2 0 0 1 2.8 1.4 H5.4 L7 3 H13.2 A1.2 1.2 0 0 1 14.4 4.2 V11 A1.2 1.2 0 0 1 13.2 12.2 H11" fill="none" stroke="#bd840f" stroke-width="1.1"/><path d="M5.4 1.6 L7 3.2" stroke="#bd840f" stroke-width="1.1"/><path d="M0.8 6.4 A2.9 2.9 0 0 0 4 10.4 L8.4 14.6 L10 13 L5.8 8.8 A2.9 2.9 0 0 0 2.6 4.8 L4 6.6 L2.8 7.8 Z" fill="#1e1e1e" stroke="#1e1e1e" stroke-width="0.9" stroke-linejoin="round"/></svg>
<span class="t" style="left:1404.20px;top:244.24px;font-size:12px;color:#1e1e1e;letter-spacing:-0.188px;">Properties</span>
<svg style="left:1361.8px;top:265.1px" width="7" height="11" viewBox="0 0 7 11"><path d="M0.8 1 L4.7 5.5 L0.8 10 Z" fill="none" stroke="#1e1e1e" stroke-width="1.2"/></svg>
<svg style="left:1384.5px;top:264.5px" width="13" height="13" viewBox="0 0 13 13"><circle cx="6.5" cy="6.4" r="5.6" fill="none" stroke="#0f6cbd" stroke-width="1.2"/><ellipse cx="6.5" cy="6.4" rx="2.5" ry="5.6" fill="none" stroke="#0f6cbd" stroke-width="1.1"/><path d="M1.4 4.2 H11.6 M1.4 8.6 H11.6" stroke="#0f6cbd" stroke-width="1.1"/></svg>
<span class="t" style="left:1404.60px;top:263.24px;font-size:12px;color:#1e1e1e;letter-spacing:0.110px;">wwwroot</span>
<svg style="left:1361.0px;top:285.6px" width="8" height="8" viewBox="0 0 8 8"><path d="M7 0.4 V7 H0.4 Z" fill="#2b2b2b"/></svg>
<svg style="left:1383.1px;top:283.4px" width="15" height="13" viewBox="0 0 15 13"><path d="M1 2.6 A1.4 1.4 0 0 1 2.4 1.2 H5.2 L6.8 2.8 H12.4 A1.4 1.4 0 0 1 13.8 4.2 V10.6 A1.4 1.4 0 0 1 12.4 12 H2.4 A1.4 1.4 0 0 1 1 10.6 Z" fill="none" stroke="#bd840f" stroke-width="1.1"/><path d="M1.2 4.8 H5 L6.8 3" fill="none" stroke="#bd840f" stroke-width="1.1"/></svg>
<span class="t" style="left:1404.20px;top:282.24px;font-size:12px;color:#1e1e1e;letter-spacing:-0.042px;">Controllers</span>
<svg style="left:1379.8px;top:303.1px" width="7" height="11" viewBox="0 0 7 11"><path d="M0.8 1 L4.7 5.5 L0.8 10 Z" fill="none" stroke="#1e1e1e" stroke-width="1.2"/></svg>
<span class="t" style="left:1401.7px;top:300.6px;font-family:'Liberation Mono',monospace;font-size:12px;color:#158a15;-webkit-text-stroke:0.35px #158a15;letter-spacing:-0.3px">C#</span>
<span class="t" style="left:1422.50px;top:301.24px;font-size:12px;color:#1e1e1e;letter-spacing:0.022px;">MyVintasoftFileApiController.cs</span>
<svg style="left:1379.8px;top:322.1px" width="7" height="11" viewBox="0 0 7 11"><path d="M0.8 1 L4.7 5.5 L0.8 10 Z" fill="none" stroke="#1e1e1e" stroke-width="1.2"/></svg>
<span class="t" style="left:1401.7px;top:319.6px;font-family:'Liberation Mono',monospace;font-size:12px;color:#158a15;-webkit-text-stroke:0.35px #158a15;letter-spacing:-0.3px">C#</span>
<span class="t" style="left:1422.50px;top:320.24px;font-size:12px;color:#1e1e1e;letter-spacing:0.090px;">MyVintasoftOfficeApiController.cs</span>
<svg style="left:1361.8px;top:341.1px" width="7" height="11" viewBox="0 0 7 11"><path d="M0.8 1 L4.7 5.5 L0.8 10 Z" fill="none" stroke="#1e1e1e" stroke-width="1.2"/></svg>
<svg style="left:1383px;top:339.6px" width="15" height="16" viewBox="0 0 15 16"><path d="M4.6 6 V2.2 A1.2 1.2 0 0 1 5.8 1 H9.4 L13.4 5 V12.8 A1.2 1.2 0 0 1 12.2 14 H10" fill="none" stroke="#2b2b2b" stroke-width="1.1"/><path d="M9.2 1.2 V5.2 H13.2" fill="none" stroke="#2b2b2b" stroke-width="1.1"/></svg>
<span class="t" style="left:1383.4px;top:344.6px;font-size:8.5px;font-weight:bold;letter-spacing:1.4px;color:#1e1e1e;line-height:12px;height:12px">{}</span>
<span class="t" style="left:1404.20px;top:339.24px;font-size:12px;color:#1e1e1e;letter-spacing:-0.037px;">appsettings.json</span>
<svg style="left:1382.4px;top:358.6px" width="15" height="16" viewBox="0 0 15 16"><path d="M4.6 6 V2.2 A1.2 1.2 0 0 1 5.8 1 H9.4 L13.4 5 V12.8 A1.2 1.2 0 0 1 12.2 14 H10" fill="none" stroke="#2b2b2b" stroke-width="1.1"/><path d="M9.2 1.2 V5.2 H13.2" fill="none" stroke="#2b2b2b" stroke-width="1.1"/></svg>
<span class="t" style="left:1382.8px;top:365.6px;font-size:6.5px;font-weight:bold;letter-spacing:-0.3px;color:#1e1e1e;line-height:8px;height:8px">M</span>
<svg style="left:1388.8px;top:367.4px" width="7" height="7" viewBox="0 0 7 7"><path d="M3 0.2 V5 M0.8 3 L3 5.2 L5.2 3" fill="none" stroke="#2b2b2b" stroke-width="1"/></svg>
<span class="t" style="left:1404.20px;top:358.24px;font-size:12px;color:#1e1e1e;transform:scaleX(0.9530);transform-origin:0 0;">CHANGELOG.md</span>
<svg style="left:1361.8px;top:379.1px" width="7" height="11" viewBox="0 0 7 11"><path d="M0.8 1 L4.7 5.5 L0.8 10 Z" fill="none" stroke="#1e1e1e" stroke-width="1.2"/></svg>
<span class="t" style="left:1383.7px;top:376.6px;font-family:'Liberation Mono',monospace;font-size:12px;color:#158a15;-webkit-text-stroke:0.35px #158a15;letter-spacing:-0.3px">C#</span>
<span class="t" style="left:1404.20px;top:377.24px;font-size:12px;color:#1e1e1e;letter-spacing:-0.172px;">Program.cs</span>
<span class="t" style="left:1685.8px;top:63.4px;transform-origin:0 0;transform:rotate(90deg) translate(0,-16px);letter-spacing:-0.03px;color:#1e1e1e">Diagnostic Tools</span>
<div class="a" style="left:0;top:903px;width:1706px;height:20px;background:#6c6c6c"></div>
<svg style="left:4px;top:906px" width="17" height="17" viewBox="0 0 17 17"><path d="M0.6 1.6 H15.4 V13.4 H11.6 L8 17 L4.4 13.4 H0.6 Z" fill="none" stroke="#e6e6e6" stroke-width="1.2" stroke-linejoin="miter"/></svg>
<span class="t" style="left:31.00px;top:907.14px;font-size:12px;color:#ffffff;transform:scaleX(0.9168);transform-origin:0 0;">Ready</span>
<svg style="left:1355.5px;top:908px" width="11" height="12" viewBox="0 0 11 12"><path d="M5.4 11.6 V1 M0.8 5.6 L5.4 1 L10 5.6" fill="none" stroke="#ffffff" stroke-width="1.1"/></svg>
<span class="t" style="left:1377.40px;top:907.14px;font-size:12px;color:#ffffff;letter-spacing:-0.015px;">Add to Source Control</span>
<svg style="left:1503px;top:911px" width="9" height="6" viewBox="0 0 9 6"><path d="M0.7 5.1 L4.5 1.3 L8.3 5.1" fill="none" stroke="#ffffff" stroke-width="1.1"/></svg>
<svg style="left:1527.5px;top:908px" width="14" height="13" viewBox="0 0 14 13"><rect x="0.6" y="0.8" width="12.6" height="3.4" rx="0.8" fill="none" stroke="#ffffff" stroke-width="1"/><path d="M1.6 4.4 V10.6 A1.2 1.2 0 0 0 2.8 11.8 H11 A1.2 1.2 0 0 0 12.2 10.6 V4.4 M4.8 6.8 H9" fill="none" stroke="#ffffff" stroke-width="1"/></svg>
<span class="t" style="left:1551.20px;top:907.14px;font-size:12px;color:#ffffff;letter-spacing:-0.290px;">Select Repository</span>
<svg style="left:1648.5px;top:911px" width="9" height="6" viewBox="0 0 9 6"><path d="M0.7 5.1 L4.5 1.3 L8.3 5.1" fill="none" stroke="#ffffff" stroke-width="1.1"/></svg>
<svg style="left:1674.5px;top:907px" width="12" height="14" viewBox="0 0 12 14"><path d="M1 10.2 C2.2 9 2 7.4 2 5.6 A4 4 0 0 1 10 5.6 C10 7.4 9.8 9 11 10.2 Z M4.4 10.6 A1.7 1.7 0 0 0 7.6 10.6" fill="none" stroke="#ffffff" stroke-width="1" stroke-linejoin="round"/></svg>
<svg style="left:1698px;top:915px" width="8" height="8"><g fill="#a8a8a8"><rect x="5" y="1" width="1.4" height="1.4"/><rect x="2.5" y="3.5" width="1.4" height="1.4"/><rect x="5" y="3.5" width="1.4" height="1.4"/><rect x="0" y="6" width="1.4" height="1.4"/><rect x="2.5" y="6" width="1.4" height="1.4"/><rect x="5" y="6" width="1.4" height="1.4"/></g></svg>
</body></html>
